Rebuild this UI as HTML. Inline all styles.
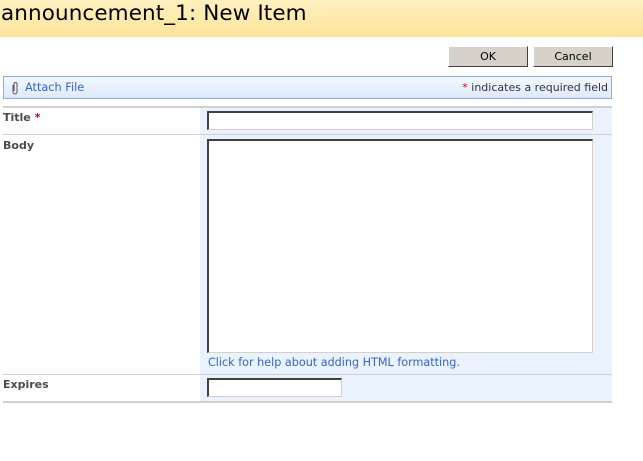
<!DOCTYPE html>
<html><head><style>
body{margin:0;width:643px;height:461px;background:#fff;font-family:Tahoma,"DejaVu Sans","Liberation Sans",sans-serif;position:relative;overflow:hidden}
.a{position:absolute}
.hdr{left:0;top:0;width:643px;height:37px;background:linear-gradient(#fff0c0,#fde49a)}
.hdr span{position:absolute;left:1px;top:1px;font-size:21.5px;font-family:"DejaVu Sans",sans-serif;color:#000;letter-spacing:0.1px}
.btn{height:19px;background:#d6d2ca;border:1px solid #fff;border-right-color:#404040;border-bottom-color:#404040;font-size:11px;text-align:center;line-height:19px;font-family:"DejaVu Sans",sans-serif}
.tb{left:3px;top:76px;width:607px;height:21px;border:1px solid #84aeea;background:linear-gradient(#f4f8fe,#dde9fb)}
.lbl{font-size:11px;font-weight:bold;color:#4c4c4c;font-family:"DejaVu Sans",sans-serif}
.line{left:3px;width:609px;height:1px;background:#d0d0d0}
.inp{background:#fff;border:1px solid #d4d0c8;border-top:2px solid #404040;border-left:2px solid #404040;box-sizing:border-box}
.blue{color:#3366cc;font-size:11px;font-family:"DejaVu Sans",sans-serif}
</style></head><body>
<div class="a hdr"><span>announcement_1: New Item</span></div>
<div class="a btn" style="left:448px;top:46px;width:78px">OK</div>
<div class="a btn" style="left:533px;top:46px;width:78px">Cancel</div>
<div class="a tb">
<svg class="a" style="left:7px;top:4px" width="8" height="14" viewBox="0 0 8 14"><path d="M2 4v7a2 2 0 0 0 4 0V3a1.5 1.5 0 0 0-3 0v7" fill="none" stroke="#555" stroke-width="1"/></svg>
<span class="a blue" style="left:21px;top:4px;font-size:11.3px">Attach File</span>
<span class="a" style="right:3px;top:4px;font-size:11px;color:#333;font-family:'DejaVu Sans',sans-serif"><span style="color:#d00">*</span> indicates a required field</span>
</div>
<div class="a" style="left:200px;top:107px;width:412px;height:294px;background:#eaf2fd"></div>
<div class="a line" style="top:106px;height:2px"></div>
<div class="a line" style="top:134px"></div>
<div class="a line" style="top:374px"></div>
<div class="a line" style="top:401px;height:2px"></div>
<div class="a lbl" style="left:3px;top:111px">Title <span style="color:#d00">*</span></div>
<div class="a lbl" style="left:3px;top:139px">Body</div>
<div class="a lbl" style="left:3px;top:378px">Expires</div>
<div class="a inp" style="left:207px;top:111px;width:386px;height:19px"></div>
<div class="a inp" style="left:207px;top:139px;width:386px;height:214px"></div>
<div class="a blue" style="left:208px;top:356px;font-size:11.2px">Click for help about adding HTML formatting.</div>
<div class="a inp" style="left:207px;top:378px;width:135px;height:19px"></div>
</body></html>
